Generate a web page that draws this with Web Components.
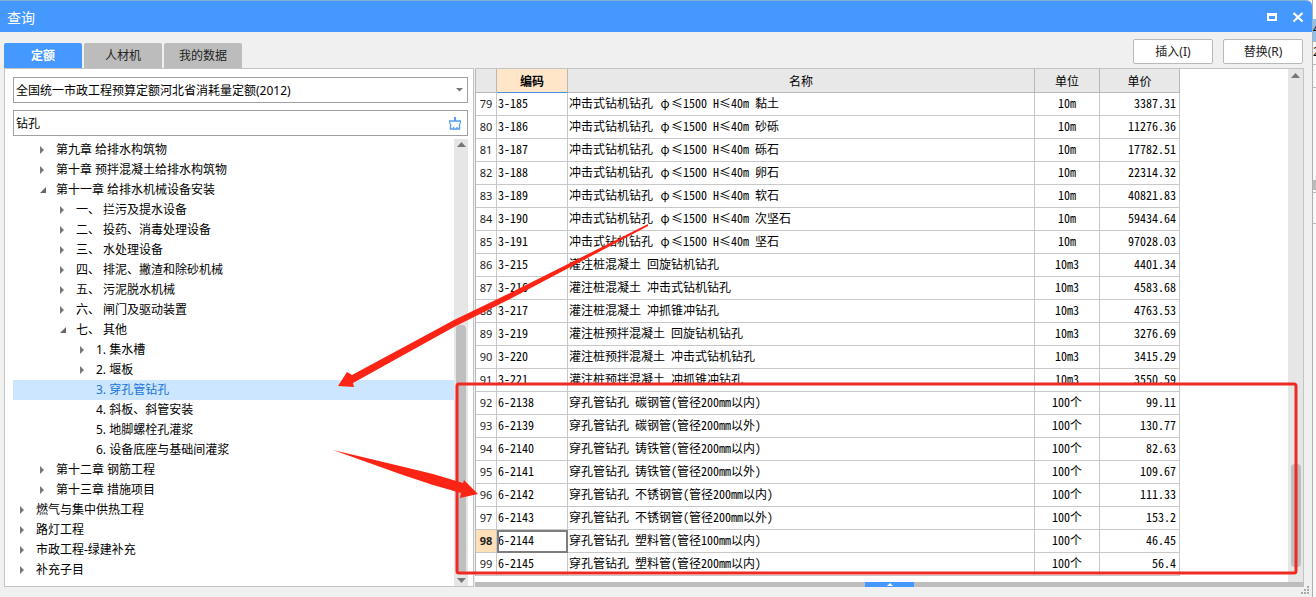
<!DOCTYPE html>
<html lang="zh-CN">
<head>
<meta charset="utf-8">
<title>查询</title>
<style>
html,body{margin:0;height:100%;overflow:hidden}
body{font:12px/20px "Noto Sans","Noto Sans CJK SC",sans-serif;color:#000;background:#f8f8f8}
</style>
</head>
<body>
<query-window></query-window>
<script>
const define = (name, html, setup) => customElements.define(name, class extends HTMLElement {
  connectedCallback() {
    if (this.shadowRoot) return;
    this.attachShadow({mode: 'open'}).innerHTML = html;
    if (setup) setup(this, this.shadowRoot);
  }
});

define('title-bar', `<style>
:host{display:flex;align-items:center;box-sizing:border-box;height:32px;padding:2px 8px 0 7px;background:#4598ff;border-top:1px solid #7fadd8;border-radius:0 6px 0 0;color:#fff}
h1{margin:0;flex:1;font-size:14px;font-weight:400}
button{all:unset;width:12px;height:24px;margin-left:14px;display:flex;align-items:center;justify-content:center}
</style>
<h1><slot></slot></h1>
<button aria-label="最大化"><svg width="12" height="12"><path d="M1 1h10v8H1zM3 4v3h6V4z" fill="#fff" fill-rule="evenodd"/></svg></button>
<button aria-label="关闭"><svg width="12" height="12"><path d="M1.500 1l9 8.500M10.500 1l-9 8.500" stroke="#fff" stroke-width="2.200"/></svg></button>`);

define('tab-item', `<style>
:host{display:block}
button{all:unset;width:78px;height:25px;background:#bcbcbc;color:#222;text-align:center;line-height:25px;border-radius:2px 2px 0 0;display:block}
:host([active]) button{background:#4598ff;color:#fff;font-weight:700}
</style><button role="tab"><slot></slot></button>`);

define('push-button', `<style>
:host{display:block}
button{display:block;box-sizing:border-box;width:80px;height:25px;padding:0;font:inherit;line-height:23px;color:#222;background:#fff;border:1px solid #b9b9b9;border-radius:2px}
</style><button><slot></slot></button>`);

define('library-select', `<style>
:host{display:grid;grid-template-columns:1fr;align-items:center}
select,svg{grid-area:1/1}
select{appearance:none;box-sizing:border-box;width:100%;height:26px;padding:2px 2px 0;margin:0;font:inherit;color:#000;background:#fff;border:1px solid #a0a0a0;border-radius:0}
svg{justify-self:end;margin-right:5px;pointer-events:none}
</style><select aria-label="定额库"><option>全国统一市政工程预算定额河北省消耗量定额(2012)</option></select>
<svg width="7" height="4"><path d="M0 0h7L3.5 3.5z" fill="#777"/></svg>`);

define('search-box', `<style>
:host{display:flex;align-items:center;box-sizing:border-box;height:26px;border:1px solid #a0a0a0;background:#fff;padding-right:6px}
input{flex:1;min-width:0;height:22px;border:0;outline:0;padding:0 2px;font:inherit;color:#000;background:none}
button{all:unset;display:flex}
</style><input type="text" aria-label="搜索" value="钻孔">
<button aria-label="清除"><svg width="12" height="13" fill="none" stroke="#5a9cf0"><path d="M6 0v4" stroke-width="2"/><path d="M.5 6.500V4h11v2.500" stroke-width="1.500"/><path d="M1.500 6.500v5.500h9V6.500M4 12l1-2M8 12v-2" stroke-width="1.400"/></svg></button>`);

define('scroll-bar', `<style>
:host{display:flex;flex-direction:column;align-items:center;width:14px;background:#e6e6e6;padding:3px 0 3px;box-sizing:border-box}
:host([wide]){width:15px;padding-top:4px}
svg{flex:none}
.t{flex:1;display:flex;flex-direction:column;width:10px;min-height:0}
.a{flex:var(--before)}.b{flex:var(--size);background:#bfbfbf;border-radius:4px}.c{flex:var(--after)}
:host([no-down]) .d{display:none}
</style><svg width="9" height="5"><path d="M0 5L4.500 0 9 5z" fill="#777"/></svg><div class="t"><div class="a"></div><div class="b"></div><div class="c"></div></div><svg class="d" width="9" height="5"><path d="M0 0h9L4.500 5z" fill="#777"/></svg>`);

define('tree-row', `<style>
:host{display:flex;align-items:center;height:20px;padding-left:calc(var(--level)*20px + 5px);white-space:pre}
:host([selected]){background:#cce6ff;color:#1a74d9}
svg{width:18px;flex:none}
</style><svg width="18" height="12"></svg><slot></slot>`, (el, root) => {
  el.style.setProperty('--level', el.getAttribute('level'));
  const s = root.querySelector('svg');
  if (el.hasAttribute('closed')) s.innerHTML = '<path d="M2 2l4 4-4 4z" fill="#777"/>';
  if (el.hasAttribute('open')) s.innerHTML = '<path d="M8 3v6H2z" fill="#666"/>';
});

const TREE = [
 [1,'closed','第九章 给排水构筑物'],[1,'closed','第十章 预拌混凝土给排水构筑物'],[1,'open','第十一章 给排水机械设备安装'],
 [2,'closed','一、 拦污及提水设备'],[2,'closed','二、 投药、消毒处理设备'],[2,'closed','三、 水处理设备'],[2,'closed','四、 排泥、撇渣和除砂机械'],
 [2,'closed','五、 污泥脱水机械'],[2,'closed','六、 闸门及驱动装置'],[2,'open','七、 其他'],[3,'closed','1. 集水槽'],[3,'closed','2. 堰板'],
 [3,'selected','3. 穿孔管钻孔'],[3,'','4. 斜板、斜管安装'],[3,'','5. 地脚螺栓孔灌浆'],[3,'','6. 设备底座与基础间灌浆'],
 [1,'closed','第十二章 钢筋工程'],[1,'closed','第十三章 措施项目'],[0,'closed','燃气与集中供热工程'],[0,'closed','路灯工程'],
 [0,'closed','市政工程-绿建补充'],[0,'closed','补充子目']];

define('catalog-tree', `<style>
:host{display:flex;min-height:0;flex:1}
.rows{flex:1;overflow:hidden;padding-top:1px}
scroll-bar{--before:177;--size:248;--after:4}
</style><div class="rows">${TREE.map(([l,s,t]) => `<tree-row level="${l}" ${s}>${t}</tree-row>`).join('')}</div><scroll-bar></scroll-bar>`);

const drill = '冲击式钻机钻孔 φ≤1500 H≤40m ', pile = '灌注桩混凝土 ', mixed = '灌注桩预拌混凝土 ', pipe = '穿孔管钻孔 ';
const ROWS = [
 ['3-185',drill+'黏土','10m','3387.31'],['3-186',drill+'砂砾','10m','11276.36'],['3-187',drill+'砾石','10m','17782.51'],
 ['3-188',drill+'卵石','10m','22314.32'],['3-189',drill+'软石','10m','40821.83'],['3-190',drill+'次坚石','10m','59434.64'],
 ['3-191',drill+'坚石','10m','97028.03'],['3-215',pile+'回旋钻机钻孔','10m3','4401.34'],['3-216',pile+'冲击式钻机钻孔','10m3','4583.68'],
 ['3-217',pile+'冲抓锥冲钻孔','10m3','4763.53'],['3-219',mixed+'回旋钻机钻孔','10m3','3276.69'],['3-220',mixed+'冲击式钻机钻孔','10m3','3415.29'],
 ['3-221',mixed+'冲抓锥冲钻孔','10m3','3550.59'],['6-2138',pipe+'碳钢管(管径200mm以内)','100个','99.11'],['6-2139',pipe+'碳钢管(管径200mm以外)','100个','130.77'],
 ['6-2140',pipe+'铸铁管(管径200mm以内)','100个','82.63'],['6-2141',pipe+'铸铁管(管径200mm以外)','100个','109.67'],
 ['6-2142',pipe+'不锈钢管(管径200mm以内)','100个','111.33'],['6-2143',pipe+'不锈钢管(管径200mm以外)','100个','153.2'],
 ['6-2144',pipe+'塑料管(管径100mm以内)','100个','46.45'],['6-2145',pipe+'塑料管(管径200mm以内)','100个','56.4']];
const cellText = t => t.replace('φ', '<span class="wide">φ</span>');

define('quota-grid', `<style>
:host{display:flex;flex:1;min-height:0;background:#fff;border-top:1px solid #c4c4c4;border-right:1px solid #c4c4c4}
.area{flex:1;overflow:hidden;padding-right:108px}
table{width:100%;table-layout:fixed;border-collapse:separate;border-spacing:0;border-left:1px solid #b8b8b8;font-family:"Noto Sans CJK SC",sans-serif;font-feature-settings:"hwid"}
col.n{width:21px}col.c{width:71px}col.u{width:65px}col.p{width:80px}
th,td{box-sizing:border-box;height:23px;padding:0 1px;border:solid #c8c8c8;border-width:0 1px 1px 0;line-height:20px;text-align:left;font-weight:400;white-space:pre;overflow:hidden;vertical-align:top}
thead th{height:24px;background:#e8e8e8;text-align:center;border-color:#b8b8b8;line-height:23px}
thead th.on{background:#ffe6c8;border-bottom-color:#4a90e0;font-weight:700}
tbody th{padding:0;text-align:center;font-size:11px;line-height:22px;color:#222;font-family:"Noto Sans",sans-serif}
td:nth-child(4){text-align:center}
td:nth-child(5){text-align:right;padding-right:3px}
tr.cur th{background:#ffe0b8;font-weight:700}
tr.cur td:nth-child(2){outline:2px solid #7d7d7d;outline-offset:-2px}
.cell{height:22px;overflow:hidden}
.wide{display:inline-block;width:12px;text-align:center}
tr.cut .cell{height:15px}
scroll-bar{--before:383;--size:102;--after:12}
</style><div class="area"><table><colgroup><col class="n"><col class="c"><col><col class="u"><col class="p"></colgroup>
<thead><tr><th></th><th class="on">编码</th><th>名称</th><th>单位</th><th>单价</th></tr></thead>
<tbody>${ROWS.map((r,i) => `<tr class="${i==12?'cut':i==19?'cur':''}"><th><div class="cell">${79+i}</div></th>${r.map(c=>`<td><div class="cell">${cellText(c)}</div></td>`).join('')}</tr>`).join('')}</tbody></table></div>
<scroll-bar wide no-down></scroll-bar>`);

define('pane-splitter', `<style>
:host{display:flex;justify-content:center;height:5px;background:#bdbdbd}
button{all:unset;width:49px;height:5px;background:#4598ff;display:flex;justify-content:center;align-items:center}
</style><button aria-label="展开"><svg width="6" height="3"><path d="M0 3l3-3 3 3z" fill="#fff"/></svg></button>`);

define('size-grip', `<style>
:host{display:block;position:absolute;right:7px;bottom:2px}
svg{display:block}
</style><svg width="9" height="9" fill="#aaa"><path d="M7 0h2v2H7zM7 3h2v2H7zM4 3h2v2H4zM7 6h2v2H7zM4 6h2v2H4zM1 6h2v2H1z"/></svg>`);

define('window-behind', `<style>
:host{display:block;width:4px;overflow:hidden;background:#f8f8f8;border-left:1px solid #b0b0b0;box-sizing:border-box}
div{box-sizing:border-box;height:23px;border-bottom:1px solid #b8b8b8;line-height:20px}
.top{height:19px;border:0;background:#fff}.sel{background:#8cc0f5}.gap{height:92px;border:0}.thumb{height:10px;background:#bbb;border:0}.low{height:3px}.row{height:31px}
</style><div class="top"></div><div class="sel">4</div><div>2</div><div></div><div class="gap"></div><div class="thumb"></div><div class="low"></div><div class="row"></div>`);

define('mark-up', `<style>
:host{position:absolute;inset:0;pointer-events:none}
svg{display:block}
</style><svg width="1316" height="597"><rect x="457" y="384" width="839" height="189" rx="2" fill="none" stroke="#ee2a22" stroke-width="3"/>
<path d="M648 224L510 293 454 320 352 375 347 372 338 386 354 387 353 383 454 327 510 299 648 226z" fill="#fc2414"/>
<path d="M333 450L400 466 433 474 463 483 464 480 478 494 460 498 461 493 433 485 400 474z" fill="#fc2414"/></svg>`);

define('query-window', `<style>
:host{display:flex;height:100vh;position:relative}
.win{flex:1;min-width:0;display:flex;flex-direction:column;background:#f0f0f0}
.tools{display:flex;align-items:flex-end;height:36px;padding:0 9px 0 4px;gap:2px}
.tools .gap{flex:1}
push-button{margin:0 0 4px 8px}
.body{flex:1;min-height:0;display:flex;margin:0 8px 10px 4px}
.left{width:470px;box-sizing:border-box;border:1px solid #c4c4c4;background:#fff;display:flex;flex-direction:column;padding:8px 5px 0 8px}
search-box{margin:7px 0 3px}
.right{flex:1;min-width:0;display:flex;flex-direction:column;margin-left:1px}
</style>
<div class="win"><title-bar>查询</title-bar>
<div class="tools"><tab-item active>定额</tab-item><tab-item>人材机</tab-item><tab-item>我的数据</tab-item><span class="gap"></span><push-button>插入(I)</push-button><push-button>替换(R)</push-button></div>
<div class="body"><div class="left"><library-select></library-select><search-box></search-box><catalog-tree></catalog-tree></div>
<div class="right"><quota-grid></quota-grid><pane-splitter></pane-splitter></div></div></div>
<window-behind></window-behind><size-grip></size-grip><mark-up></mark-up>`);
</script>
</body>
</html>
